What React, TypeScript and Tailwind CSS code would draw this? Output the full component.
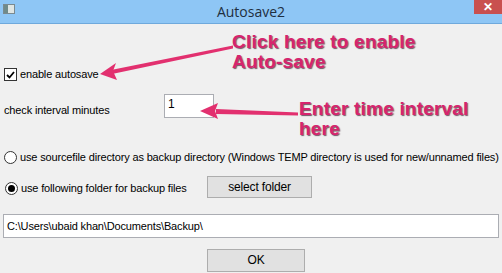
import type { ReactNode } from "react";

function Checkbox({ checked }: { checked?: boolean }) {
  return (
    <span className="flex h-[13px] w-[13px] shrink-0 items-center justify-center border border-[#333] bg-white">
      {checked && (
        <svg width="9" height="8" viewBox="0 0 9 8" aria-hidden>
          <path d="M1 4 L3.5 6.5 L8 1" fill="none" stroke="#000" strokeWidth="1.8" />
        </svg>
      )}
    </span>
  );
}

function Radio({ checked }: { checked?: boolean }) {
  return (
    <span className="flex h-[13px] w-[13px] shrink-0 items-center justify-center rounded-full border border-[#333] bg-white">
      {checked && <span className="h-[7px] w-[7px] rounded-full bg-black" />}
    </span>
  );
}

function Button({ children, className }: { children: ReactNode; className: string }) {
  return (
    <div
      className={`flex items-center justify-center border border-[#adadad] bg-[#e1e1e1] text-[12px] ${className}`}
    >
      {children}
    </div>
  );
}

function Note({ children, className }: { children: ReactNode; className: string }) {
  return (
    <div
      className={`absolute whitespace-nowrap font-['Liberation_Sans',Arial,sans-serif] text-[19px] font-bold leading-[20px] tracking-[0.2px] text-[#d6246e] [text-shadow:1px_1px_1px_rgba(60,20,40,0.7)] ${className}`}
    >
      {children}
    </div>
  );
}

export default function App() {
  return (
    <div className="relative h-[273px] w-[502px] overflow-hidden bg-[#f0f0f0] font-['Liberation_Sans',Arial,sans-serif] text-[11px] leading-[13px] tracking-[-0.15px] text-black">
      <header className="relative flex h-[24px] items-center justify-center border-b border-[#6fa9dc] bg-[#8ec6f5] tracking-normal">
        <span className="absolute left-[3px] top-[4px] flex h-[10px] w-[12px] border border-[#7a8a90] bg-[#dfe6e4]">
          <span className="h-full w-[4px] bg-[#6f8b8a]" />
        </span>
        <span className="font-['Open_Sans',sans-serif] text-[14px] leading-[20px] text-[#1e2f40]">Autosave2</span>
        <span className="absolute right-0 top-0 flex h-[14px] w-[28px] items-center justify-center bg-[#c9504f] text-[12px] font-bold leading-none text-white">
          ✕
        </span>
      </header>

      <main className="flex flex-col whitespace-nowrap">
        <label className="ml-[4px] mt-[44px] flex h-[13px] items-center gap-[3px]">
          <Checkbox checked />
          <span>enable autosave</span>
        </label>

        <div className="ml-[4px] mt-[13px] flex h-[24px] items-end">
          <span className="w-[160px] pb-[1px]">check interval minutes</span>
          <div className="h-[24px] w-[50px] self-start border border-[#abadb3] bg-white px-[3px] pt-[2px] text-[12px] leading-[15px]">
            1
          </div>
        </div>

        <label className="ml-[4px] mt-[33px] flex h-[13px] items-center gap-[3px]">
          <Radio />
          <span>use sourcefile directory as backup directory (Windows TEMP directory is used for new/unnamed files)</span>
        </label>

        <div className="ml-[5px] mt-[12px] flex h-[22px] items-center">
          <label className="flex w-[202px] items-center gap-[3px] pt-[2px]">
            <Radio checked />
            <span>use following folder for backup files</span>
          </label>
          <Button className="h-[22px] w-[105px]">select folder</Button>
        </div>

        <div className="mx-[3px] mt-[16px] flex h-[24px] items-center border border-[#abadb3] bg-white px-[3px]">
          C:\Users\ubaid khan\Documents\Backup\
        </div>

        <Button className="ml-[207px] mt-[11px] h-[23px] w-[98px]">OK</Button>
      </main>

      <svg className="absolute left-0 top-0" width="502" height="273" aria-hidden>
        <g fill="#e2306f">
          <polygon points="233,45.5 233,48.5 112,74 111,70" />
          <polygon points="100,74 116,63 113,71 117,80" />
          <polygon points="298,112.5 298,115.5 216,114 216,109" />
          <polygon points="200,111 218,103 215,111 218,119" />
        </g>
      </svg>

      <Note className="left-[232px] top-[32px]">
        Click here to enable
        <br />
        Auto-save
      </Note>
      <Note className="left-[299px] top-[99px]">
        Enter time interval
        <br />
        here
      </Note>
    </div>
  );
}
